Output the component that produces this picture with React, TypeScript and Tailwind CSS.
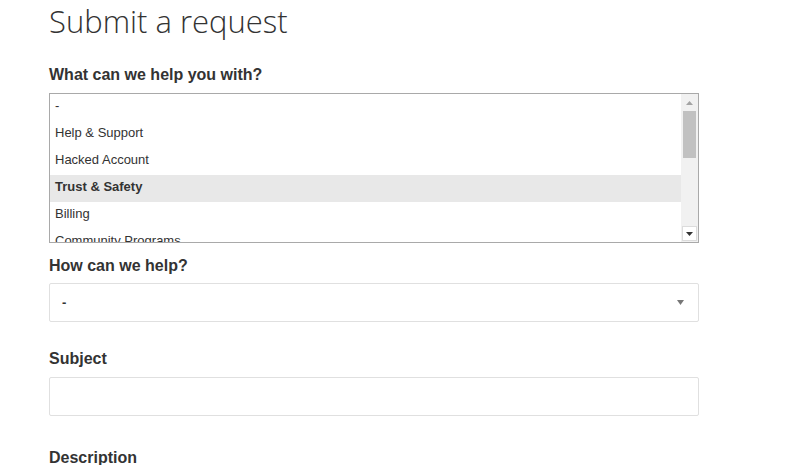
import React from 'react';

const topics = ['-', 'Help & Support', 'Hacked Account', 'Trust & Safety', 'Billing', 'Community Programs'];

function TopicList() {
  return (
    <div className="flex h-[150px] w-[650px] overflow-hidden border border-[#a9a9a9] bg-white">
      <ul className="flex-1 overflow-hidden">
        {topics.map((t) => (
          <li
            key={t}
            className={
              'h-[27px] shrink-0 pl-[5px] text-[13px] leading-[23px] text-[#333] ' +
              (t === 'Trust & Safety' ? 'bg-[#e8e8e8] font-bold' : '')
            }
          >
            {t}
          </li>
        ))}
      </ul>
      {/* scrollbar */}
      <div className="flex w-[17px] flex-col bg-[#f1f1f1]">
        <div className="flex h-[17px] items-center justify-center">
          <svg width="7" height="4" viewBox="0 0 7 4">
            <path d="M0 4 L3.5 0 L7 4 Z" fill="#a3a3a3" />
          </svg>
        </div>
        <div className="mx-[2px] h-[47px] bg-[#c1c1c1]" />
        <div className="flex-1" />
        <div className="m-px flex h-[15px] items-center justify-center border border-[#dcdcdc] bg-white">
          <svg width="7" height="4" viewBox="0 0 7 4">
            <path d="M0 0 L7 0 L3.5 4 Z" fill="#333" />
          </svg>
        </div>
      </div>
    </div>
  );
}

export default function App() {
  return (
    <div className="min-h-screen bg-white pl-[49px] font-['Liberation_Sans',Arial,sans-serif] text-[#333]">
      <h1 className="h-[44px] pt-[1px] font-['Open_Sans',sans-serif] text-[31px] font-light leading-[40px] text-[#333]">
        Submit a request
      </h1>
      <div className="mt-[21px] text-[16px] font-bold leading-[20px]">What can we help you with?</div>
      <div className="mt-[8px]">
        <TopicList />
      </div>

      <div className="mt-[13px] text-[16px] font-bold leading-[20px]">How can we help?</div>
      <div className="mt-[7px] flex h-[39px] w-[650px] items-center justify-between rounded-[2px] border border-[#e0e0e0] pl-[12px] pr-[14px]">
        <span className="text-[13px] font-bold">-</span>
        <svg width="7" height="5" viewBox="0 0 7 5">
          <path d="M0 0 L7 0 L3.5 5 Z" fill="#777" />
        </svg>
      </div>

      <div className="mt-[27px] text-[16px] font-bold leading-[20px]">Subject</div>
      <div className="mt-[8px] h-[39px] w-[650px] rounded-[2px] border border-[#e0e0e0]" />

      <div className="mt-[32px] text-[16px] font-bold leading-[20px]">Description</div>
    </div>
  );
}
